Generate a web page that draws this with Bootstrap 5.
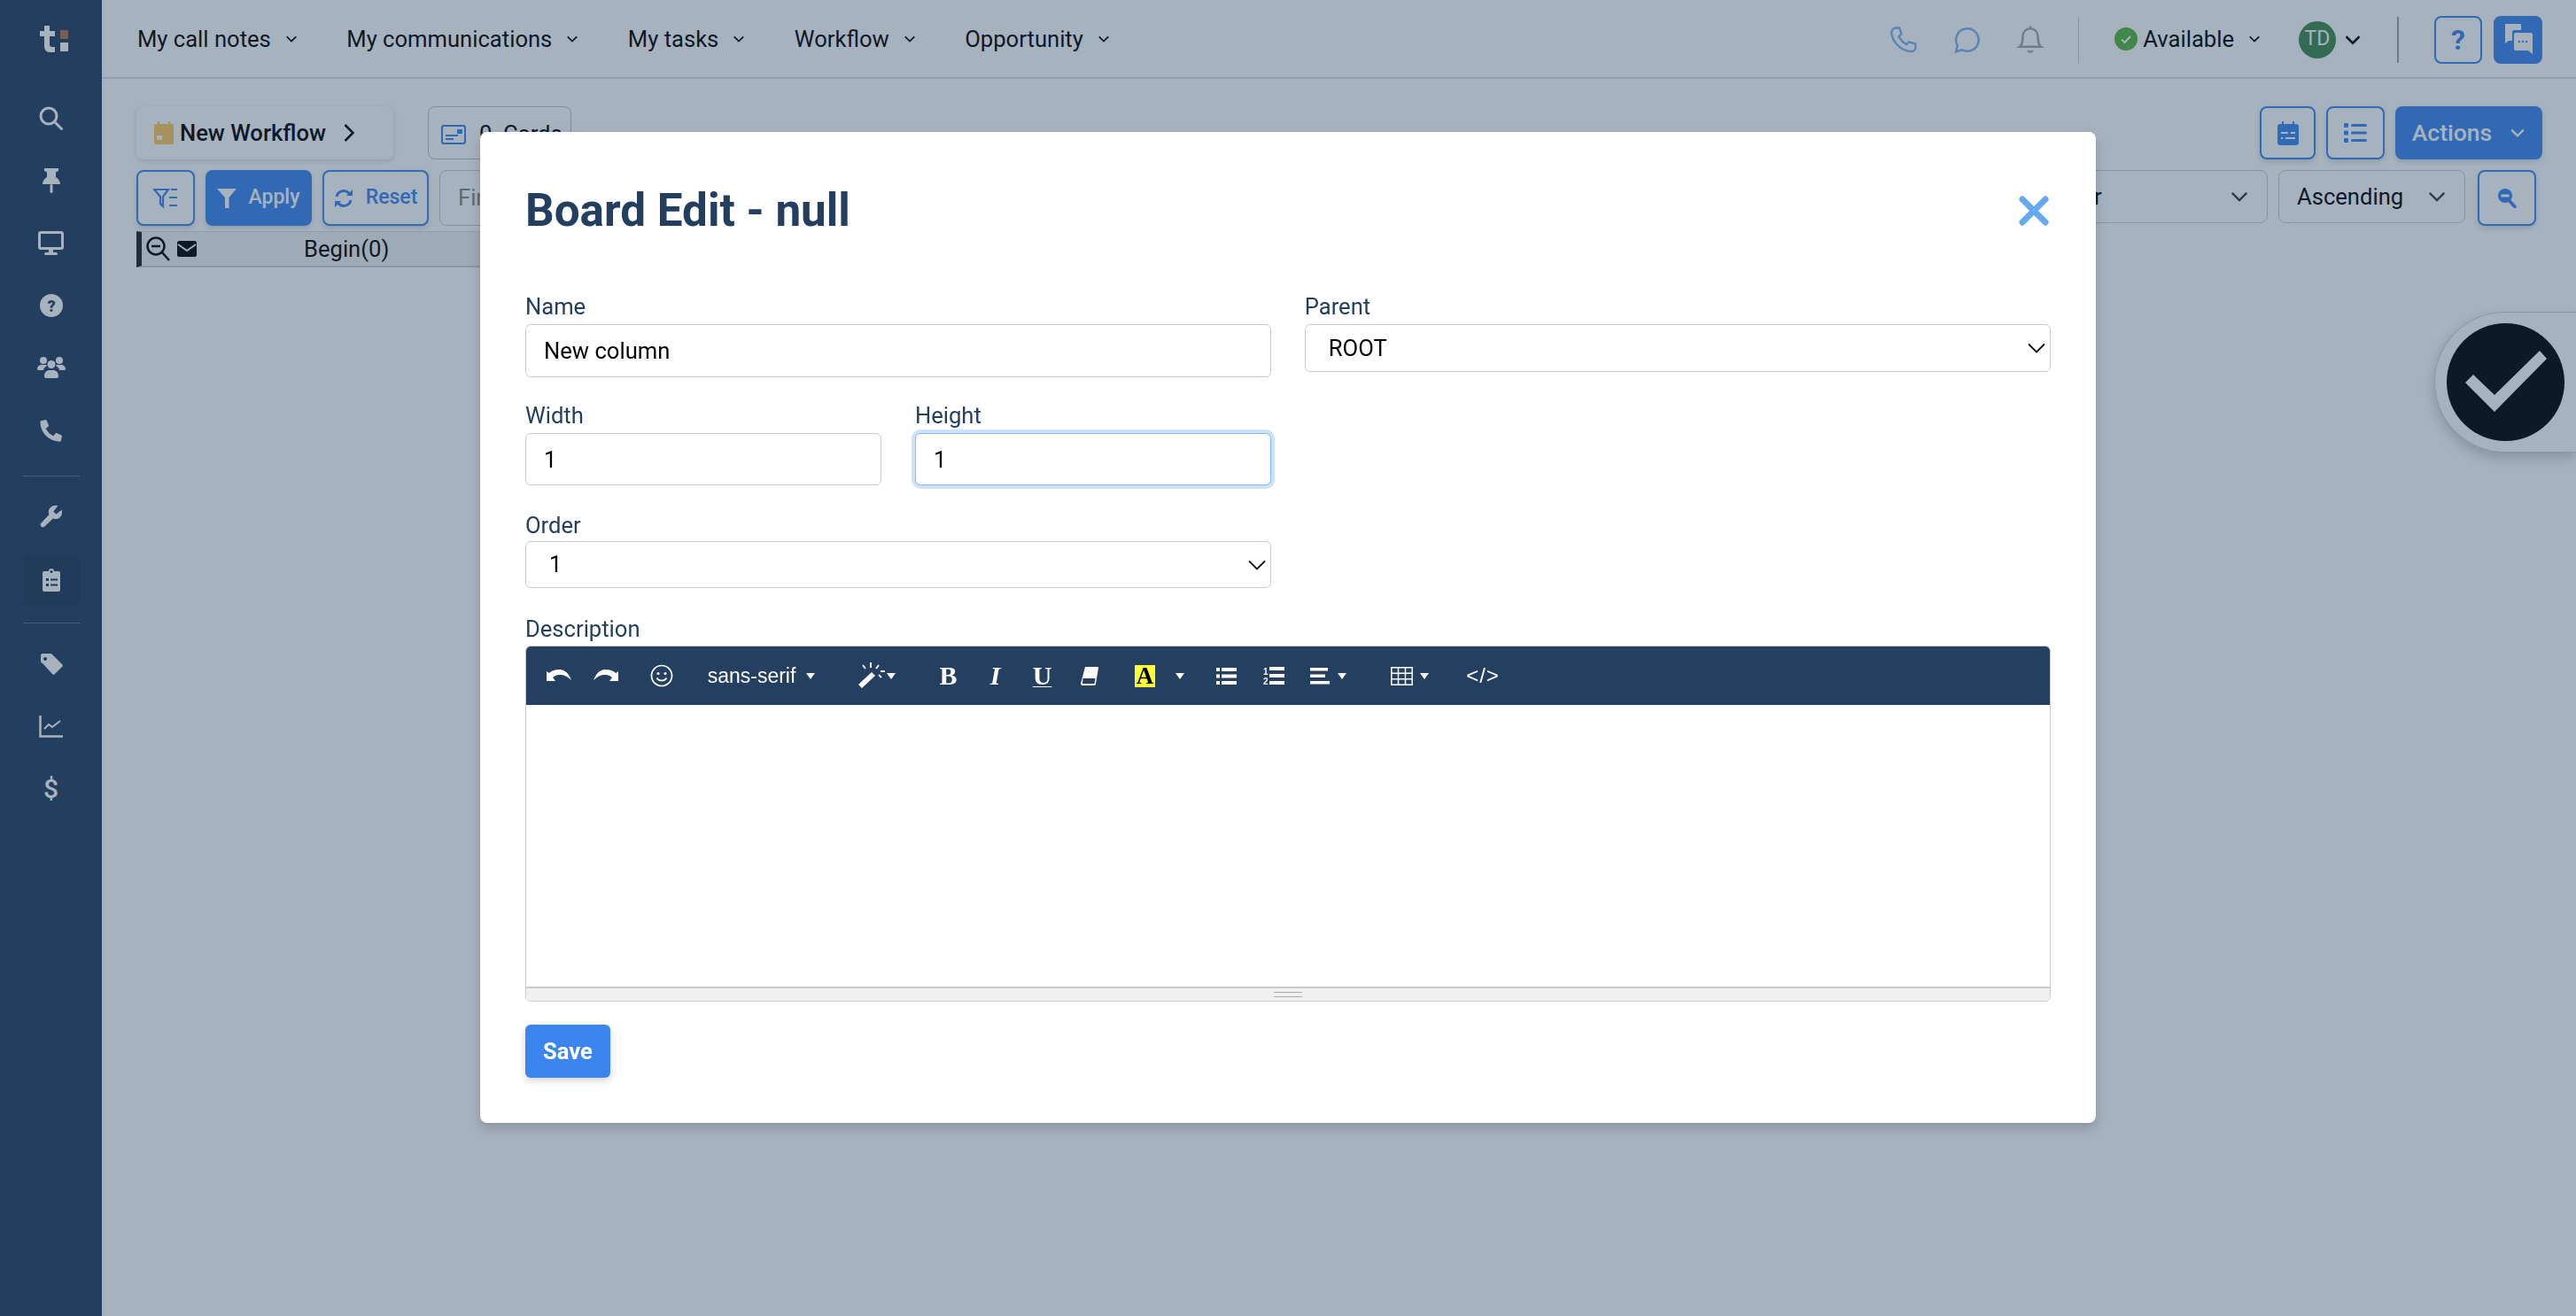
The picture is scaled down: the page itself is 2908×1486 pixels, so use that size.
<!DOCTYPE html>
<html lang="en">
<head>
  <meta charset="UTF-8">
  <meta name="viewport" content="width=device-width, initial-scale=1.0">
  <title>Board Edit</title>
  <link rel="stylesheet" href="https://cdn.jsdelivr.net/npm/bootstrap@5.3.0/dist/css/bootstrap.min.css">
  <style>
    html, body { height: 100%; }
    body { font-family: Roboto, "Liberation Sans", sans-serif; font-size: 25.6px; color: #000; background: #fff; overflow: hidden; }
    svg { display: block; flex-shrink: 0; }

    /* sidebar */
    .side-bar { width: 115px; flex-shrink: 0; background: #243e5f; color: #fff; }
    .side-logo { height: 89px; border-bottom: 1px solid #213a59; font-size: 0; padding-left: 6px; }
    .side-menu { padding-top: 9px; }
    .side-item { height: 70.5px; }
    .side-item.active-item { height: 58px; width: 64px; margin: 7px auto 6px; background: #233a58; border-radius: 8px; }
    .side-rule { height: 1px; width: 64px; background: #5a7089; margin: 16px auto 10px; }
    .side-rule.low { margin: 19px auto 11px; }
    .side-dollar { font-size: 30px; font-weight: 500; line-height: 1; }

    /* top header */
    .top-bar { height: 89px; border-bottom: 2px solid #dcdfe3; padding: 2px 38px 0 40px; }
    .top-nav { gap: 55.5px; }
    .top-link { gap: 16px; color: #000; text-decoration: none; }
    .top-rule { width: 1px; height: 52px; background: #c9ccd0; }
    .top-rule.strong { width: 2px; background: #9da3a9; }
    .blue-ico { color: #7db3f0; }
    .grey-ico { color: #a3a7ab; }
    .user-dot { width: 42px; height: 42px; border-radius: 50%; background: #3e894d; color: #fff; font-size: 23px; }
    .ok-dot { width: 26px; height: 26px; border-radius: 50%; background: #55b73c; }
    .ico-set { gap: 38px; margin-right: 37px; }
    .status-set { margin-left: 40px; gap: 6px; }
    .status-chev { margin-left: 10px; }
    .user-set { margin: 0 40px 0 43px; gap: 9px; }
    .help-set { margin-left: 40px; gap: 13px; }
    .tool-btn { display: inline-flex; align-items: center; justify-content: center; border: 2px solid #3b86ee; border-radius: 8px; color: #3b86ee; background: #fff; box-shadow: 0 3px 6px rgba(0,0,0,.14); padding: 0; font-size: 23px; font-weight: 500; }
    .tool-btn.solid { background: #3b86ee; color: #fff; }
    .btn-help { width: 54px; height: 54px; font-size: 32px; font-weight: 700; box-shadow: none; }
    .btn-chat { width: 55px; height: 54px; box-shadow: none; }

    /* board controls */
    .board-area { padding: 31px 38px 0 39px; }
    .flow-card { width: 290px; height: 60px; padding-left: 20px; gap: 7px; background: #fff; border-radius: 8px; box-shadow: 0 2px 6px rgba(0,0,0,.14); font-weight: 500; }
    .flow-chev { margin-left: 13px; }
    .cards-tag { width: 162px; height: 60px; margin-left: 39px; padding: 3px 0 0 14px; gap: 15px; border: 1px solid #b9bec4; border-radius: 8px; }
    .btn-cal { width: 63px; height: 60px; }
    .btn-list { width: 66px; height: 60px; }
    .btn-actions { width: 166px; height: 60px; gap: 20px; font-size: 26.5px; }
    .filter-row { margin-top: 12px; padding-right: 7px; }
    .btn-filter { width: 66px; height: 63px; }
    .btn-apply { width: 120px; height: 63px; gap: 13px; }
    .btn-reset { width: 120px; height: 63px; gap: 14px; }
    .find-box { width: 400px; height: 63px; padding-left: 20px; border: 1px solid #c6cad0; border-radius: 8px; color: #7d8790; }
    .sort-select { height: 60px; font-size: 25.6px; padding: 0 20px; border: 1px solid #c6cad0; border-radius: 8px; color: #000;
      background-image: url("data:image/svg+xml,%3csvg xmlns='http://www.w3.org/2000/svg' viewBox='0 0 16 16'%3e%3cpath fill='none' stroke='%23343a40' stroke-width='1.7' d='M2 5l6 6 6-6'/%3e%3c/svg%3e");
      background-size: 22px; background-position: right 20px center; }
    .sort-order { width: 278px; padding-left: 27px; }
    .sort-dir { width: 211px; margin-right: 2px; }
    .btn-zoomout { width: 66px; height: 63px; }
    .col-head { width: 600px; height: 41px; margin-top: 6px; background: #f2f2f2; border-left: 6px solid #222; border-bottom: 2px solid #cfcfcf; border-top: 1px solid #ddd; padding-left: 5px; }
    .col-title { margin-left: 121px; }

    /* floating done tab */
    .done-tab { position: fixed; top: 352px; right: 0; width: 160px; height: 159px; padding: 12px 0 0 13px; background: #fff; border: 1px solid #cfd3d8; border-right: 0; border-radius: 80px 0 0 80px; box-shadow: 0 6px 16px rgba(0,0,0,.22); }

    /* modal */
    .modal-backdrop.board-dim { --bs-backdrop-bg: #243e5f; --bs-backdrop-opacity: .4; }
    .modal-dialog.board-dialog { max-width: 1824px; width: 1824px; margin: 149px 0 0 542px; }
    .board-panel { border: 0; border-radius: 8px; padding: 59px 51.5px 51px 51px; box-shadow: 0 6px 14px rgba(0,0,0,.18); }
    .board-title { height: 60px; margin-bottom: 63px; }
    .board-title h1 { font-size: 51.2px; line-height: 60px; font-weight: 700; color: #243e5f; margin: 0; }
    .board-close { border: 0; background: none; padding: 0; color: #66a9f1; margin-right: 2px; }
    .field-label { display: block; font-size: 25.6px; line-height: 30px; color: #243e5f; margin: 0 0 5px; }
    .field-input { height: 60px; padding: 0 20px; font-size: 25.6px; color: #000; border: 1px solid #ccc; border-radius: 6px; }
    .field-input.short { height: 59px; }
    .field-input.is-focus { border-color: #86b7fe; box-shadow: 0 0 0 4px #cfe2fb; }
    .field-select { font-size: 25.6px; padding: 0 26px; color: #000; border: 1px solid #ccc; border-radius: 6px;
      background-image: url("data:image/svg+xml,%3csvg xmlns='http://www.w3.org/2000/svg' viewBox='0 0 16 16'%3e%3cpath fill='none' stroke='%23111' stroke-width='1.2' d='M2 5l6 6 6-6'/%3e%3c/svg%3e");
      background-size: 24px; background-position: right 3px center; }
    .select-root { height: 54px; }
    .select-order { height: 53px; }
    .form-line { --bs-gutter-x: 38px; }
    .line-size { margin-top: 28px; }
    .line-order { margin-top: 30px; }
    .line-desc { margin-top: 31px; }
    .line-desc .field-label { margin-bottom: 4px; }
    .line-order .field-label { margin-bottom: 3px; }

    /* rich text editor */
    .rte-box { border: 1px solid #ccc; border-radius: 6px; overflow: hidden; }
    .rte-bar { height: 66px; padding-left: 10px; background: #253f60; color: #fff; }
    .rte-btn { width: 53px; height: 66px; border: 0; padding: 0; background: none; color: #fff; }
    .rte-btn.b-font { width: 153px; gap: 12px; font-family: "Liberation Sans", sans-serif; font-size: 23px; }
    .rte-btn.b-wand { width: 87px; gap: 0; }
    .rte-btn.b-drop { width: 26px; }
    .rte-btn.b-align { width: 71px; gap: 9px; }
    .rte-btn.b-table { width: 89px; gap: 8px; }
    .rte-btn.b-code { width: 56px; font-family: "Liberation Sans", sans-serif; font-size: 24px; letter-spacing: 1px; }
    .rte-group { margin-right: 10px; }
    .rte-group.mid { margin-right: 11px; }
    .rte-group.wide { margin-right: 13px; }
    .rte-group.widest { margin-right: 12px; }
    .rte-caret { width: 0; height: 0; border-left: 5.5px solid transparent; border-right: 5.5px solid transparent; border-top: 7px solid #fff; }
    .rte-serif { font-family: "Liberation Serif", serif; font-size: 30px; line-height: 1; font-weight: 700; }
    .rte-serif.slant { font-style: italic; }
    .rte-serif.under { text-decoration: underline; text-decoration-thickness: 1px; text-underline-offset: 2px; }
    .rte-hilite { width: 23px; height: 25px; background: #ffff33; color: #000; font-family: "Liberation Serif", serif; font-size: 27px; line-height: 25px; font-weight: 700; text-align: center; }
    .rte-body { height: 318px; background: #fff; }
    .rte-foot { height: 16px; background: #f0f0f0; border-top: 2px solid #ccc; }
    .rte-grip { width: 32px; height: 6px; border-top: 1px solid #a9a9a9; border-bottom: 1px solid #a9a9a9; }
    .btn-save { width: 96px; height: 60px; margin-top: 26px; padding: 0; background: #3b86ee; border: 0; border-radius: 6px; color: #fff; font-size: 25.6px; font-weight: 700; box-shadow: 0 3px 8px rgba(0,0,0,.18); }
  </style>
</head>
<body>
  <svg width="0" height="0" class="position-absolute">
    <symbol id="chev" viewBox="0 0 16 16"><path d="M2 5l6 6 6-6" fill="none" stroke="currentColor" stroke-width="2"/></symbol>
  </svg>

  <div class="d-flex h-100">
    <aside class="side-bar">
      <div class="side-logo d-flex align-items-center justify-content-center">
        <svg width="32" height="30" viewBox="0 0 32 30">
          <path d="M5 0h6v6h6v6h-6v9c0 2 1 3 3 3h3v6h-6c-4 0-6-3-6-7V12H0V6h5z" fill="#fff"/>
          <rect x="23" y="5" width="9" height="10" fill="#b3714a"/>
          <rect x="23" y="19" width="9" height="10" fill="#fff"/>
        </svg>
      </div>
      <nav class="side-menu">
        <div class="side-item d-flex align-items-center justify-content-center">
          <svg width="27" height="27" viewBox="0 0 27 27" fill="none" stroke="#fff" stroke-width="3"><circle cx="11" cy="11" r="9"/><path d="M17.500 17.500l8 8" stroke-linecap="round"/></svg>
        </div>
        <div class="side-item d-flex align-items-center justify-content-center">
          <svg width="20" height="28" viewBox="0 0 20 28" fill="#fff"><path d="M2 0h16v3l-3 1.500V10c2 1 5 4 5 8H0c0-4 3-7 5-8V4.500L2 3z"/><rect x="8.500" y="18" width="3" height="10" rx="1.500"/></svg>
        </div>
        <div class="side-item d-flex align-items-center justify-content-center">
          <svg width="29" height="27" viewBox="0 0 29 27" fill="#fff"><path fill-rule="evenodd" d="M3 0h23a3 3 0 0 1 3 3v15a3 3 0 0 1-3 3H3a3 3 0 0 1-3-3V3a3 3 0 0 1 3-3zm0 3v15h23V3z"/><rect x="12" y="20" width="5" height="4"/><rect x="7" y="24" width="15" height="3" rx="1.500"/></svg>
        </div>
        <div class="side-item d-flex align-items-center justify-content-center">
          <svg width="26" height="26" viewBox="0 0 26 26"><circle cx="13" cy="13" r="13" fill="#fff"/><text x="13" y="19.500" text-anchor="middle" font-family="Roboto" font-weight="900" font-size="18" fill="#243e5f">?</text></svg>
        </div>
        <div class="side-item d-flex align-items-center justify-content-center">
          <svg width="32" height="26" viewBox="0 0 32 26" fill="#fff"><circle cx="7" cy="5" r="4"/><circle cx="25" cy="5" r="4"/><circle cx="16" cy="9.500" r="4.500"/><path d="M0 15c0-3 2-5 5-5h4c1 0 2 .5 2 1-2 1-4 3-4 5H1zM32 15c0-3-2-5-5-5h-4c-1 0-2 .5-2 1 2 1 4 3 4 5h6zM8 23c0-5 3-7 6-7h4c3 0 6 2 6 7 0 1-1 2-2 2H10c-1 0-2-1-2-2z"/></svg>
        </div>
        <div class="side-item d-flex align-items-center justify-content-center">
          <svg width="26" height="26" viewBox="0 0 24 24" fill="#fff"><path d="M22.500 17l-5-2.200a1 1 0 0 0-1.200.3l-2.200 2.700A16 16 0 0 1 6.200 10l2.700-2.200a1 1 0 0 0 .3-1.200L7 1.600a1 1 0 0 0-1.200-.6L1.200 2a1 1 0 0 0-.8 1C.4 14.300 9.700 23.600 21 23.600a1 1 0 0 0 1-.8l1-4.600a1 1 0 0 0-.5-1.200z"/></svg>
        </div>
        <div class="side-rule"></div>
        <div class="side-item d-flex align-items-center justify-content-center">
          <svg width="26" height="26" viewBox="0 0 24 24" fill="#fff"><path d="M14.700 6.300a1 1 0 0 0 0 1.400l1.600 1.600a1 1 0 0 0 1.400 0l5-4c1 3 .3 6-2 8-2 1.700-4.500 2-7 1L5 22.500a2.500 2.500 0 0 1-3.600-3.600l8.200-8.700c-1-2.500-.6-5 1.100-7 2-2.300 5-3 8-2z"/></svg>
        </div>
        <div class="side-item active-item d-flex align-items-center justify-content-center">
          <svg width="20" height="26" viewBox="0 0 20 26"><path fill="#fff" d="M7 3a3 3 0 0 1 6 0h5a2 2 0 0 1 2 2v19a2 2 0 0 1-2 2H2a2 2 0 0 1-2-2V5a2 2 0 0 1 2-2z"/><g fill="#233a58"><circle cx="10" cy="3.500" r="1.500"/><rect x="4" y="11" width="3" height="3"/><rect x="9" y="11.500" width="8" height="2"/><rect x="4" y="17" width="3" height="3"/><rect x="9" y="17.500" width="8" height="2"/></g></svg>
        </div>
        <div class="side-rule low"></div>
        <div class="side-item d-flex align-items-center justify-content-center">
          <svg width="26" height="24" viewBox="0 0 26 24"><path fill="#fff" d="M1 2a2 2 0 0 1 2-2h9a3 3 0 0 1 2 1l11 11a2 2 0 0 1 0 3l-8 8a2 2 0 0 1-3 0L3 11a3 3 0 0 1-2-2z"/><circle cx="6" cy="6" r="2" fill="#243e5f"/></svg>
        </div>
        <div class="side-item d-flex align-items-center justify-content-center">
          <svg width="27" height="25" viewBox="0 0 27 25" fill="none" stroke="#fff" stroke-width="2.500"><path d="M1.500 0v23.500H27"/><path d="M6 15l5-5 4 3 9-7" stroke-width="2"/></svg>
        </div>
        <div class="side-item d-flex align-items-center justify-content-center side-dollar">$</div>
      </nav>
    </aside>

    <main class="flex-grow-1 d-flex flex-column">
      <header class="top-bar d-flex align-items-center justify-content-between">
        <nav class="top-nav d-flex">
          <a class="top-link d-flex align-items-center" href="#">My call notes <svg width="14" height="14"><use href="#chev"/></svg></a>
          <a class="top-link d-flex align-items-center" href="#">My communications <svg width="14" height="14"><use href="#chev"/></svg></a>
          <a class="top-link d-flex align-items-center" href="#">My tasks <svg width="14" height="14"><use href="#chev"/></svg></a>
          <a class="top-link d-flex align-items-center" href="#">Workflow <svg width="14" height="14"><use href="#chev"/></svg></a>
          <a class="top-link d-flex align-items-center" href="#">Opportunity <svg width="14" height="14"><use href="#chev"/></svg></a>
        </nav>
        <div class="d-flex align-items-center">
          <div class="ico-set d-flex align-items-center">
            <svg class="blue-ico" width="34" height="34" viewBox="0 0 24 24" fill="none" stroke="currentColor" stroke-width="1.700"><path d="M7 2.300l2.500.2 1.400 5-2 1.700a15 15 0 0 0 6 6.500l2.100-2 5 1.500.2 2.600c0 2.300-2 3.800-4 3.500C10.500 20.500 3.500 13.500 3 6.500 3 4.200 4.700 2.300 7 2.300z"/></svg>
            <svg class="blue-ico" width="34" height="34" viewBox="0 0 24 24" fill="none" stroke="currentColor" stroke-width="1.700"><path d="M12.500 3a9 9 0 1 1-4 17l-5 1.500 1.300-5A9 9 0 0 1 12.500 3z"/></svg>
            <svg class="grey-ico" width="34" height="34" viewBox="0 0 24 24" fill="none" stroke="currentColor" stroke-width="1.700"><path d="M18 9a6 6 0 0 0-12 0c0 7-2.500 8.500-2.500 8.500h17S18 16 18 9z"/><path d="M10.200 20.500a2 2 0 0 0 3.600 0M12 1v2"/></svg>
          </div>
          <div class="top-rule"></div>
          <div class="status-set d-flex align-items-center">
            <span class="ok-dot d-flex align-items-center justify-content-center"><svg width="16" height="16" viewBox="0 0 16 16" fill="none" stroke="#fff" stroke-width="2"><path d="M3 8.500l3.500 3.500L13 5"/></svg></span>
            <span>Available</span>
            <svg class="status-chev" width="14" height="14"><use href="#chev"/></svg>
          </div>
          <div class="user-set d-flex align-items-center">
            <span class="user-dot d-flex align-items-center justify-content-center">TD</span>
            <svg width="20" height="20"><use href="#chev"/></svg>
          </div>
          <div class="top-rule strong"></div>
          <div class="help-set d-flex align-items-center">
            <button class="tool-btn btn-help" type="button">?</button>
            <button class="tool-btn solid btn-chat" type="button">
              <svg width="32" height="36" viewBox="0 0 32 36" fill="#fff"><path d="M1 0h17a1 1 0 0 1 1 1v6h-8a2 2 0 0 0-2 2v10H5l-4 3V1a1 1 0 0 1 0-1z"/><path d="M13 10h17a2 2 0 0 1 2 2v16l1 7-6-5H13a2 2 0 0 1-2-2V12a2 2 0 0 1 2-2z"/><g fill="#3b86ee"><circle cx="17" cy="20" r="1.200"/><circle cx="21" cy="20" r="1.200"/><circle cx="25" cy="20" r="1.200"/></g></svg>
            </button>
          </div>
        </div>
      </header>

      <section class="board-area">
        <div class="d-flex justify-content-between">
          <div class="d-flex">
            <div class="flow-card d-flex align-items-center">
              <svg width="22" height="26" viewBox="0 0 22 26" fill="#ffca5c"><path fill-rule="evenodd" d="M4 0h2v3h10V0h2v3h2a2 2 0 0 1 2 2v19a2 2 0 0 1-2 2H2a2 2 0 0 1-2-2V5a2 2 0 0 1 2-2h2zM3 16v5h6v-5z"/></svg>
              <span>New Workflow</span>
              <svg class="flow-chev" width="12" height="22" viewBox="0 0 12 22" fill="none" stroke="#000" stroke-width="2.500"><path d="M1.500 2l9 9-9 9"/></svg>
            </div>
            <div class="cards-tag d-flex align-items-center">
              <svg width="28" height="22" viewBox="0 0 28 22" fill="none" stroke="#3b86ee" stroke-width="2"><rect x="1" y="1" width="26" height="20" rx="2"/><rect x="18" y="5" width="6" height="5" fill="#3b86ee" stroke="none"/><path d="M5 12h14M5 16h9"/></svg>
              <span>0&nbsp;&nbsp;Cards</span>
            </div>
          </div>
          <div class="d-flex gap-2">
            <button class="tool-btn btn-cal" type="button">
              <svg width="24" height="27" viewBox="0 0 24 27" fill="#3b86ee"><path fill-rule="evenodd" d="M5 0h2v3h10V0h2v3h2a3 3 0 0 1 3 3v18a3 3 0 0 1-3 3H3a3 3 0 0 1-3-3V6a3 3 0 0 1 3-3h2zM4 12v2h8v-2zm11 0v2h5v-2zM4 18v2h2v-2zm5 0v2h11v-2z"/></svg>
            </button>
            <button class="tool-btn btn-list ms-1" type="button">
              <svg width="26" height="22" viewBox="0 0 26 22" fill="#3b86ee"><rect x="0" y="0" width="5" height="5" rx="1"/><rect x="0" y="8.500" width="5" height="5" rx="1"/><rect x="0" y="17" width="5" height="5" rx="1"/><rect x="8" y="1" width="18" height="3" rx="1.500"/><rect x="8" y="9.500" width="18" height="3" rx="1.500"/><rect x="8" y="18" width="18" height="3" rx="1.500"/></svg>
            </button>
            <button class="tool-btn solid btn-actions ms-1" type="button">Actions <svg width="18" height="18"><use href="#chev"/></svg></button>
          </div>
        </div>

        <div class="filter-row d-flex justify-content-between">
          <div class="d-flex gap-2">
            <button class="tool-btn btn-filter" type="button">
              <svg width="28" height="24" viewBox="0 0 28 24" fill="none" stroke="#3b86ee" stroke-width="2.200"><path d="M1 2h16l-6 8v11l-3-3v-8z"/><path d="M20 2h7M18 11h9M18 20h9"/></svg>
            </button>
            <button class="tool-btn solid btn-apply ms-1" type="button">
              <svg width="22" height="22" viewBox="0 0 22 22" fill="#fff"><path d="M0 0h22l-8.500 10v12H9V10z"/></svg> Apply
            </button>
            <button class="tool-btn btn-reset ms-1" type="button">
              <svg width="22" height="22" viewBox="0 0 22 22" fill="none" stroke="#3b86ee" stroke-width="3"><path d="M3 9a8 8 0 0 1 14-3.500M19 13a8 8 0 0 1-14 3.500"/><path d="M21 1v7h-7zM1 21v-7h7z" stroke="none" fill="#3b86ee"/></svg> Reset
            </button>
            <div class="find-box d-flex align-items-center ms-1">Find</div>
          </div>
          <div class="d-flex gap-2">
            <select class="form-select sort-select sort-order"><option>Order</option></select>
            <select class="form-select sort-select sort-dir ms-1"><option>Ascending</option></select>
            <button class="tool-btn btn-zoomout ms-1" type="button">
              <svg width="21" height="22" viewBox="0 0 21 22"><circle cx="8" cy="8" r="8" fill="#3b86ee"/><rect x="3.500" y="6.500" width="9" height="3" fill="#fff"/><path d="M13 14l6 6.500" stroke="#3b86ee" stroke-width="3.500" stroke-linecap="round"/></svg>
            </button>
          </div>
        </div>

        <div class="col-head d-flex align-items-center">
          <svg width="27" height="28" viewBox="0 0 27 28" fill="none" stroke="#000" stroke-width="2.500"><circle cx="11" cy="11" r="9.500"/><path d="M6 11h10M18 18l8 9"/></svg>
          <svg class="ms-2" width="22" height="18" viewBox="0 0 22 18"><rect width="22" height="18" rx="2.500" fill="#000"/><path d="M1 4l10 7 10-7" fill="none" stroke="#f2f2f2" stroke-width="2"/></svg>
          <span class="col-title">Begin(0)</span>
        </div>
      </section>
    </main>
  </div>

  <div class="done-tab">
    <svg width="133" height="133" viewBox="0 0 133 133"><circle cx="66.500" cy="66.500" r="66.500" fill="#000"/><path d="M21 67l9-9 24 23 51-50 8 9-59 60z" fill="#fff"/></svg>
  </div>

  <div class="modal-backdrop board-dim show"></div>

  <div class="modal d-block" tabindex="-1">
    <div class="modal-dialog board-dialog">
      <div class="modal-content board-panel">
        <div class="board-title d-flex align-items-center justify-content-between">
          <h1>Board Edit - null</h1>
          <button class="board-close" type="button" aria-label="Close">
            <svg width="34" height="34" viewBox="0 0 34 34" fill="none" stroke="currentColor" stroke-width="7" stroke-linecap="round"><path d="M4 4l26 26M30 4L4 30"/></svg>
          </button>
        </div>

        <form>
          <div class="row form-line">
            <div class="col-6">
              <label class="field-label">Name</label>
              <input class="form-control field-input" type="text" value="New column">
            </div>
            <div class="col-6">
              <label class="field-label">Parent</label>
              <select class="form-select field-select select-root"><option>ROOT</option></select>
            </div>
          </div>

          <div class="row form-line line-size">
            <div class="col-3">
              <label class="field-label">Width</label>
              <input class="form-control field-input short" type="text" value="1">
            </div>
            <div class="col-3">
              <label class="field-label">Height</label>
              <input class="form-control field-input short is-focus" type="text" value="1">
            </div>
          </div>

          <div class="row form-line line-order">
            <div class="col-6">
              <label class="field-label">Order</label>
              <select class="form-select field-select select-order"><option>1</option></select>
            </div>
          </div>

          <div class="line-desc">
            <label class="field-label">Description</label>
            <div class="rte-box">
              <div class="rte-bar d-flex align-items-center">
                <div class="d-flex rte-group">
                  <button class="rte-btn d-flex align-items-center justify-content-center" type="button">
                    <svg width="28" height="14" viewBox="0 0 28 14" fill="#fff"><path d="M0 2l3 2C6 1 10 0 14 0c6 0 11 4 14 12-4-4-8-6-13-6-3 0-6 1-8 3l3 4H0z"/></svg>
                  </button>
                  <button class="rte-btn d-flex align-items-center justify-content-center" type="button">
                    <svg width="28" height="14" viewBox="0 0 28 14" fill="#fff"><path d="M28 2l-3 2C22 1 18 0 14 0 8 0 3 4 0 12c4-4 8-6 13-6 3 0 6 1 8 3l-3 4h10z"/></svg>
                  </button>
                </div>
                <div class="rte-group">
                  <button class="rte-btn d-flex align-items-center justify-content-center" type="button">
                    <svg width="26" height="26" viewBox="0 0 26 26" fill="none" stroke="#fff" stroke-width="1.700"><circle cx="13" cy="13" r="11.500"/><circle cx="9" cy="10.500" r="1.500" fill="#fff" stroke="none"/><circle cx="17" cy="10.500" r="1.500" fill="#fff" stroke="none"/><path d="M7.500 15.500c2 4 9 4 11 0"/></svg>
                  </button>
                </div>
                <div class="rte-group">
                  <button class="rte-btn b-font d-flex align-items-center justify-content-center" type="button">sans-serif <span class="rte-caret"></span></button>
                </div>
                <div class="rte-group mid">
                  <button class="rte-btn b-wand d-flex align-items-center justify-content-center" type="button">
                    <svg width="33" height="30" viewBox="0 0 33 30"><path d="M1 25L16 11l4 4L5 29z" fill="#fff"/><path d="M15 0v6M6 3l3 4M24 3l-3 4M24 14l3 3M26 10h5" stroke="#fff" stroke-width="1.800" fill="none"/></svg>
                    <span class="rte-caret"></span>
                  </button>
                </div>
                <div class="d-flex rte-group">
                  <button class="rte-btn d-flex align-items-center justify-content-center rte-serif" type="button">B</button>
                  <button class="rte-btn d-flex align-items-center justify-content-center rte-serif slant" type="button">I</button>
                  <button class="rte-btn d-flex align-items-center justify-content-center rte-serif under" type="button">U</button>
                  <button class="rte-btn d-flex align-items-center justify-content-center" type="button">
                    <svg width="20" height="21" viewBox="0 0 20 21"><path d="M5 0h14a1 1 0 0 1 1 1l-3 18a2 2 0 0 1-2 2H2a2 2 0 0 1-2-2z" fill="#fff"/><path d="M2.500 13h14l-1 6H2z" fill="#253f60"/></svg>
                  </button>
                </div>
                <div class="d-flex rte-group wide">
                  <button class="rte-btn d-flex align-items-center justify-content-center" type="button"><span class="rte-hilite">A</span></button>
                  <button class="rte-btn b-drop d-flex align-items-center justify-content-center" type="button"><span class="rte-caret"></span></button>
                </div>
                <div class="d-flex rte-group widest">
                  <button class="rte-btn d-flex align-items-center justify-content-center" type="button">
                    <svg width="23" height="19" viewBox="0 0 23 19" fill="#fff"><rect width="4" height="4"/><rect x="6" width="17" height="4"/><rect y="7.500" width="4" height="4"/><rect x="6" y="7.500" width="17" height="4"/><rect y="15" width="4" height="4"/><rect x="6" y="15" width="17" height="4"/></svg>
                  </button>
                  <button class="rte-btn d-flex align-items-center justify-content-center" type="button">
                    <svg width="24" height="20" viewBox="0 0 24 20" fill="#fff"><text x="0" y="9" font-family="Liberation Sans" font-size="10" font-weight="700">1</text><text x="0" y="20" font-family="Liberation Sans" font-size="10" font-weight="700">2</text><rect x="7" width="17" height="4"/><rect x="7" y="8" width="17" height="4"/><rect x="7" y="16" width="17" height="4"/></svg>
                  </button>
                  <button class="rte-btn b-align d-flex align-items-center justify-content-center" type="button">
                    <svg width="22" height="19" viewBox="0 0 22 19" fill="#fff"><rect width="20" height="3.500"/><rect y="7.500" width="17" height="3.500"/><rect y="15" width="22" height="3.500"/></svg>
                    <span class="rte-caret"></span>
                  </button>
                </div>
                <div class="rte-group">
                  <button class="rte-btn b-table d-flex align-items-center justify-content-center" type="button">
                    <svg width="25" height="21" viewBox="0 0 25 21" fill="none" stroke="#fff" stroke-width="1.500"><rect x=".8" y=".8" width="23.400" height="19.400"/><path d="M.8 7.300h23.400M.8 13.800h23.400M8.500.8v19.400M16.500.8v19.400"/></svg>
                    <span class="rte-caret"></span>
                  </button>
                </div>
                <button class="rte-btn b-code d-flex align-items-center justify-content-center" type="button">&lt;/&gt;</button>
              </div>
              <div class="rte-body"></div>
              <div class="rte-foot d-flex align-items-center justify-content-center"><div class="rte-grip"></div></div>
            </div>
          </div>

          <button class="btn-save d-block" type="button">Save</button>
        </form>
      </div>
    </div>
  </div>

  <script src="https://cdn.jsdelivr.net/npm/bootstrap@5.3.0/dist/js/bootstrap.bundle.min.js"></script>
</body>
</html>
